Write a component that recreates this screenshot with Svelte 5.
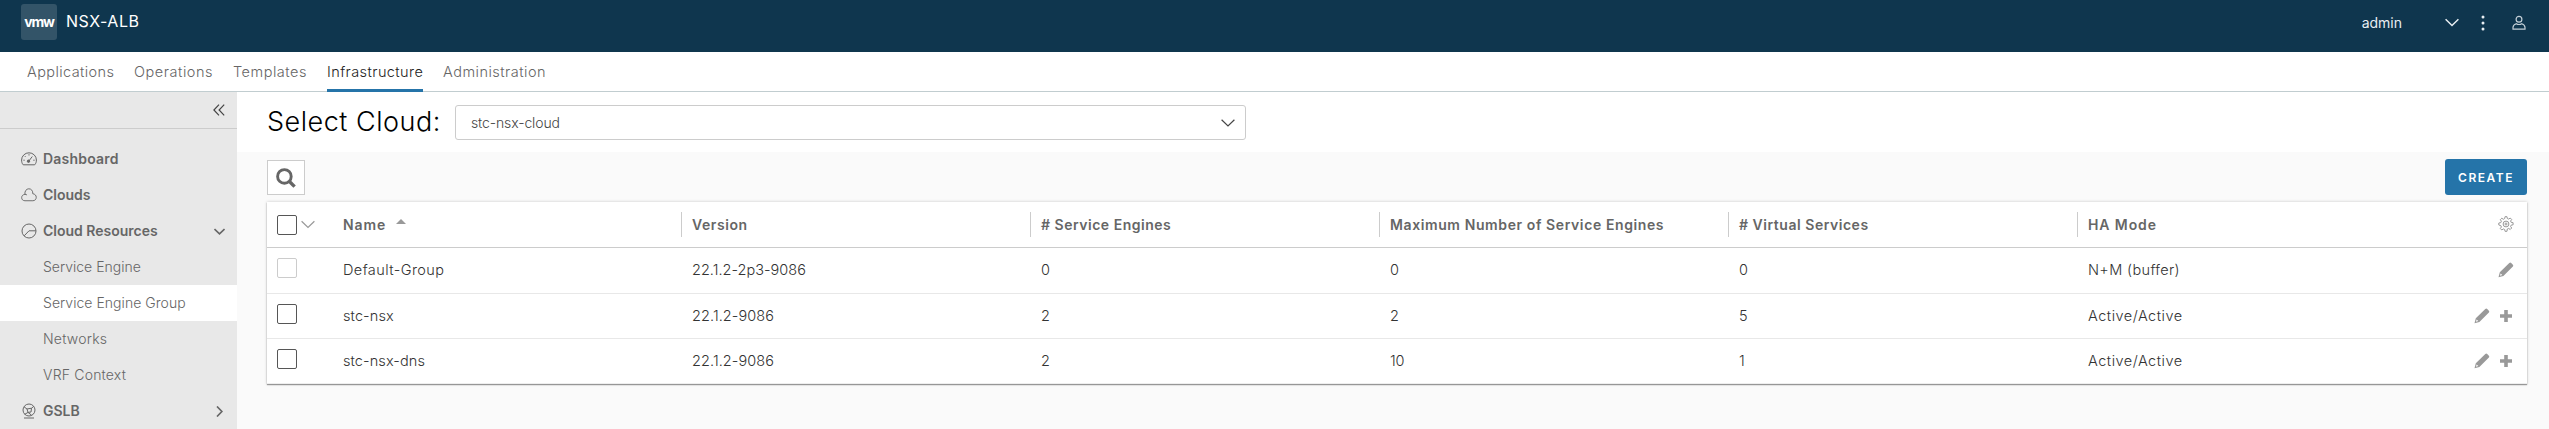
<script>
  const tabs = [
    { label: 'Applications', track: 0.41, width: 107 },
    { label: 'Operations', track: 0.54, width: 99 },
    { label: 'Templates', track: 0.52, width: 94 },
    { label: 'Infrastructure', track: 0.42, width: 116, active: true },
    { label: 'Administration', track: 0.49, width: 104 }
  ];
  const menu = [
    { label: 'Dashboard', icon: 'dash', track: 0.2 },
    { label: 'Clouds', icon: 'cloud', track: 0 },
    { label: 'Cloud Resources', icon: 'res', track: 0 },
    { label: 'Service Engine', sub: true, track: 0 },
    { label: 'Service Engine Group', sub: true, active: true, track: 0.04 },
    { label: 'Networks', sub: true, track: 0.22 },
    { label: 'VRF Context', sub: true, track: 0.2 },
    { label: 'GSLB', icon: 'globe', track: 0, arrow: 'right' }
  ];
  menu[2].arrow = 'down';
  const columns = [
    { label: 'Name', track: 0.9, sorted: true },
    { label: 'Version', track: 0.57 },
    { label: '# Service Engines', track: 0.51 },
    { label: 'Maximum Number of Service Engines', track: 0.6 },
    { label: '# Virtual Services', track: 0.53 },
    { label: 'HA Mode', track: 0.9 }
  ];
  const rows = [
    { disabled: true, cells: [['Default-Group', 0.42], ['22.1.2-2p3-9086', 0.02], ['0', 0], ['0', 0], ['0', 0], ['N+M (buffer)', 0.35]] },
    { cells: [['stc-nsx', 0.1], ['22.1.2-9086', 0.08], ['2', 0], ['2', 0], ['5', 0], ['Active/Active', 0.5]] },
    { cells: [['stc-nsx-dns', 0.09], ['22.1.2-9086', 0.08], ['2', 0], ['10', -0.3], ['1', 0], ['Active/Active', 0.5]] }
  ];
</script>

{#snippet chevron(w, h, s)}
  <svg class="chev" width={w} height={h} viewBox="0 0 14 8" fill="none" stroke="currentColor" stroke-width={s}><path d="M.6.8 7 7 13.4.8" /></svg>
{/snippet}

{#snippet pencil()}
  <svg width="16" height="16" viewBox="0 0 16 16"><path fill="currentColor" fill-rule="evenodd" d="M.5 15.200l1.300-4.900L11.300 1q1-.8 1.900 0l1.700 1.700q.8.900 0 1.900L5.400 13.900zM2 13.700l2.300-.6-1.700-1.700z" /></svg>
{/snippet}

<div class="app">
  <header>
    <div class="logo">vmw</div>
    <div class="brand">NSX-ALB</div>
    <div class="user">
      <span class="admin">admin</span>
      {@render chevron(14, 9, 1.5)}
      <svg class="dots" width="4" height="16" viewBox="0 0 4 16" fill="currentColor"><circle cx="2" cy="2" r="1.5" /><circle cx="2" cy="8" r="1.5" /><circle cx="2" cy="14" r="1.5" /></svg>
      <svg class="person" width="14" height="16" viewBox="0 0 14 16" fill="none" stroke="currentColor" stroke-width="1.2"><circle cx="7" cy="4.300" r="2.900" /><path d="M4.200 8.700C2 9.600 1 11 1 12.400v1.700h12v-1.700c0-1.400-1-2.800-3.200-3.700Q7 10.300 4.200 8.700z" /></svg>
    </div>
  </header>

  <nav class="tabs">
    {#each tabs as t}
      <div class="slot" style="width:{t.width}px"><a class:active={t.active} style="letter-spacing:{t.track}px">{t.label}</a></div>
    {/each}
  </nav>

  <div class="body">
    <aside>
      <div class="collapse">
        <svg width="12" height="12" viewBox="0 0 12 12" fill="none" stroke="currentColor" stroke-width="1.2"><path d="M6 .7.9 6 6 11.300M11.200.700 6.100 6l5.100 5.300" /></svg>
      </div>
      <ul>
        {#each menu as m}
          <li class:sub={m.sub} class:active={m.active}>
            <span class="ico">
              {#if m.icon === 'dash'}
                <svg width="16" height="16" viewBox="0 0 16 16"><path d="M2.200 13.800C.900 12.400.600 10.700.600 9a7.400 7.200 0 0 1 14.800 0c0 1.700-.4 3.400-1.700 4.800z" /><path d="M7.400 10.600 11.300 5.500M8 3.200v1.300M3.900 5.200l.8.800M2.400 9.200h1.300M12.300 9.200h1.300" /><circle cx="7.500" cy="10.200" r="1.200" fill="currentColor" /></svg>
              {:else if m.icon === 'cloud'}
                <svg width="16" height="16" viewBox="0 0 17 16"><path d="M4.200 7.300C3.700 4 5.700 1.400 8.300 1.400s4.500 2.200 4.200 5.200c2.400.4 3.700 1.900 3.700 3.900s-1.400 3.600-3.600 3.600H4.200C2 14.100.7 12.700.7 10.800s1.400-3.300 3.500-3.500c1.100 0 1.700.3 2.200.8" /></svg>
              {:else if m.icon === 'res'}
                <svg width="16" height="16" viewBox="0 0 16 16"><circle cx="8" cy="8" r="7" /><path d="M3.200 12.800 8 7.800h6.800" /></svg>
              {:else if m.icon === 'globe'}
                <svg width="16" height="16" viewBox="0 0 16 16"><circle cx="8" cy="7" r="6" /><path d="M3 3.800 6 6l4.500-.8L12.800 3.400M6 6l1 3.400 3.700 2.900M10.500 5.200 10 9l-3 .4-3.400 2M3 15h10" /></svg>
              {/if}
            </span>
            <span class="label" style="letter-spacing:{m.track}px">{m.label}</span>
            {#if m.arrow}
              <span class="arrow {m.arrow}">{@render chevron(11, 7, 2.1)}</span>
            {/if}
          </li>
        {/each}
      </ul>
    </aside>

    <main>
      <section class="cloudbar">
        <h1>Select Cloud:</h1>
        <div class="select"><span>stc-nsx-cloud</span>{@render chevron(14, 8, 1.2)}</div>
      </section>

      <section class="content">
        <div class="toolbar">
          <button class="search" aria-label="Search">
            <svg width="20" height="20" viewBox="0 0 20 20" fill="none" stroke="currentColor"><circle cx="8.400" cy="8.400" r="6.800" stroke-width="2.900" /><path d="M13.200 13.200l5.400 5.400" stroke-width="3.400" /></svg>
          </button>
          <button class="create">CREATE</button>
        </div>

        <div class="table">
          <div class="row head">
            <div class="check"><i class="box"></i>{@render chevron(14, 9, 1.2)}</div>
            {#each columns as c}
              <div class="cell">
                <span style="letter-spacing:{c.track}px">{c.label}</span>
                {#if c.sorted}<i class="sort"></i>{/if}
              </div>
            {/each}
            <div class="actions">
              <svg width="16" height="16" viewBox="0 0 16 16" fill="none" stroke="currentColor" stroke-width="1"><path d="M6.700 2.500 7 .700h2l.3 1.800 1.400.600 1.500-1.100 1.500 1.500-1.100 1.500.600 1.400 1.900.300v2.100l-1.900.300-.600 1.400 1.100 1.500-1.500 1.500-1.500-1.100-1.400.600L9 15.300H7l-.3-1.800-1.400-.600-1.500 1.100L2.300 12.500 3.400 11l-.600-1.400L.800 9V7l2-.400.600-1.400-1.100-1.500 1.500-1.500 1.500 1.100z" /><circle cx="8" cy="8" r="2.900" /><circle cx="8" cy="8" r="1" /></svg>
            </div>
          </div>
          {#each rows as r}
            <div class="row">
              <div class="check"><i class="box" class:disabled={r.disabled}></i></div>
              {#each r.cells as [text, track]}
                <div class="cell"><span style="letter-spacing:{track}px">{text}</span></div>
              {/each}
              <div class="actions">
                {@render pencil()}
                {#if !r.disabled}
                  <svg width="16" height="16" viewBox="0 0 16 16"><path fill="currentColor" d="M6.200 2h3.600v4.200H14v3.600H9.800V14H6.200V9.800H2V6.200h4.200z" /></svg>
                {/if}
              </div>
            </div>
          {/each}
        </div>
      </section>
    </main>
  </div>
</div>

<style>
  :global(body) { margin: 0; background: #fafafa; }
  * { box-sizing: border-box; }
  svg { display: block; flex: none; }
  .app { width: 100%; height: 429px; display: flex; flex-direction: column; overflow: hidden; font: 300 14.5px Inter, sans-serif; color: #333; }

  header { height: 52px; flex: none; background: #0f364e; color: #fff; display: flex; align-items: flex-start; padding: 4px 23px 0 21px; }
  .logo { width: 36px; height: 36px; border-radius: 3px; background: #335468; font-weight: 700; font-size: 14px; letter-spacing: -1.2px; line-height: 35px; text-align: center; }
  .brand { margin-left: 9px; font-size: 16px; font-weight: 400; letter-spacing: .5px; line-height: 35px; }
  .user { margin-left: auto; height: 36px; display: flex; align-items: center; color: #e8eef2; }
  .admin { font-size: 14px; font-weight: 400; line-height: 35px; margin-right: 43px; }
  .dots { margin: 2px 27px 0 22px; }
  .person { margin-top: 2px; color: #c4d0d8; }

  .tabs { height: 40px; flex: none; display: flex; padding-left: 27px; background: #fff; border-bottom: 1px solid #c1cdd0; }
  .slot { height: 40px; display: flex; }
  .tabs a { height: 40px; line-height: 40px; color: #666; white-space: nowrap; }
  .tabs a.active { color: #222; border-bottom: 3px solid #2574a9; }

  .body { flex: 1; display: flex; min-height: 0; }
  aside { width: 237px; flex: none; background: #e8e8e8; color: #666; }
  .collapse { height: 37px; border-bottom: 1px solid #ccc; display: flex; justify-content: flex-end; align-items: center; padding: 0 12px 0 0; color: #444; }
  ul { list-style: none; margin: 0; padding: 12px 0 0; }
  li { height: 36px; display: flex; align-items: center; padding: 0 12px 0 21px; font-size: 14px; font-weight: 600; }
  li.sub { font-weight: 300; }
  li.active { background: #fff; }
  .ico { width: 22px; }
  .ico svg { fill: none; stroke: #666; color: #666; stroke-width: 1; }
  .label { white-space: nowrap; line-height: 36px; }
  .arrow { margin-left: auto; }
  .arrow.right { transform: rotate(-90deg); }

  main { flex: 1; min-width: 0; display: flex; flex-direction: column; background: #fafafa; }
  .cloudbar { height: 60px; flex: none; background: #fff; display: flex; align-items: flex-start; padding: 13px 0 0 30px; }
  h1 { margin: 0; width: 188px; font-size: 27px; font-weight: 300; letter-spacing: .52px; line-height: 34px; color: #000; white-space: nowrap; }
  .select { width: 791px; height: 35px; border: 1px solid #ccc; border-radius: 3px; display: flex; align-items: center; justify-content: space-between; padding: 0 10px 0 15px; font-size: 14px; letter-spacing: -.12px; color: #454545; }

  .content { padding: 7px 22px 0 30px; }
  .toolbar { height: 36px; display: flex; justify-content: space-between; align-items: flex-start; }
  button { margin: 0; font-family: inherit; }
  .search { width: 38px; height: 35px; margin-top: 1px; padding: 0; border: 1px solid #ccc; background: #fff; color: #666; display: flex; align-items: center; justify-content: center; }
  .create { width: 82px; height: 36px; padding: 0; border: 0; border-radius: 3px; background: #2574a9; color: #fff; font-size: 12px; font-weight: 600; letter-spacing: 1.5px; line-height: 38px; }

  .table { margin-top: 7px; background: #fff; box-shadow: 0 1px 1px rgba(0, 0, 0, .35), 0 0 3px rgba(0, 0, 0, .2); }
  .row { display: grid; grid-template-columns: 65px repeat(5, 349px) 1fr auto; height: 45px; align-items: center; border-bottom: 1px solid #e8e8e8; }
  .row:nth-child(2) { height: 46px; }
  .row:last-child { border-bottom-color: #eee; }
  .head { height: 46px; border-bottom-color: #ccc; font-size: 14px; font-weight: 600; color: #666; }
  .check { display: flex; align-items: center; padding-left: 10px; color: #999; }
  .box { width: 20px; height: 20px; flex: none; border: 1px solid #565656; border-radius: 2px; margin-right: 4px; background: #fff; }
  .row:not(.head) .box { margin-top: -5px; }
  .head .box { margin-top: 1px; }
  .box.disabled { border-color: #ccc; }
  .cell { display: flex; align-items: center; padding-left: 10px; height: 25px; border-left: 1px solid transparent; white-space: nowrap; }
  .row:not(.head) .cell { margin-top: -2px; }
  .head .cell:not(:nth-child(2)) { border-left-color: #ccc; }
  .head .cell span { margin-top: -1px; }
  .sort { margin: -6px 0 0 10px; border: 5px solid transparent; border-top: 0; border-bottom: 5px solid #999; }
  .actions { display: flex; justify-content: flex-end; gap: 8px; padding-right: 13px; margin-top: -1px; color: #999; }
</style>
